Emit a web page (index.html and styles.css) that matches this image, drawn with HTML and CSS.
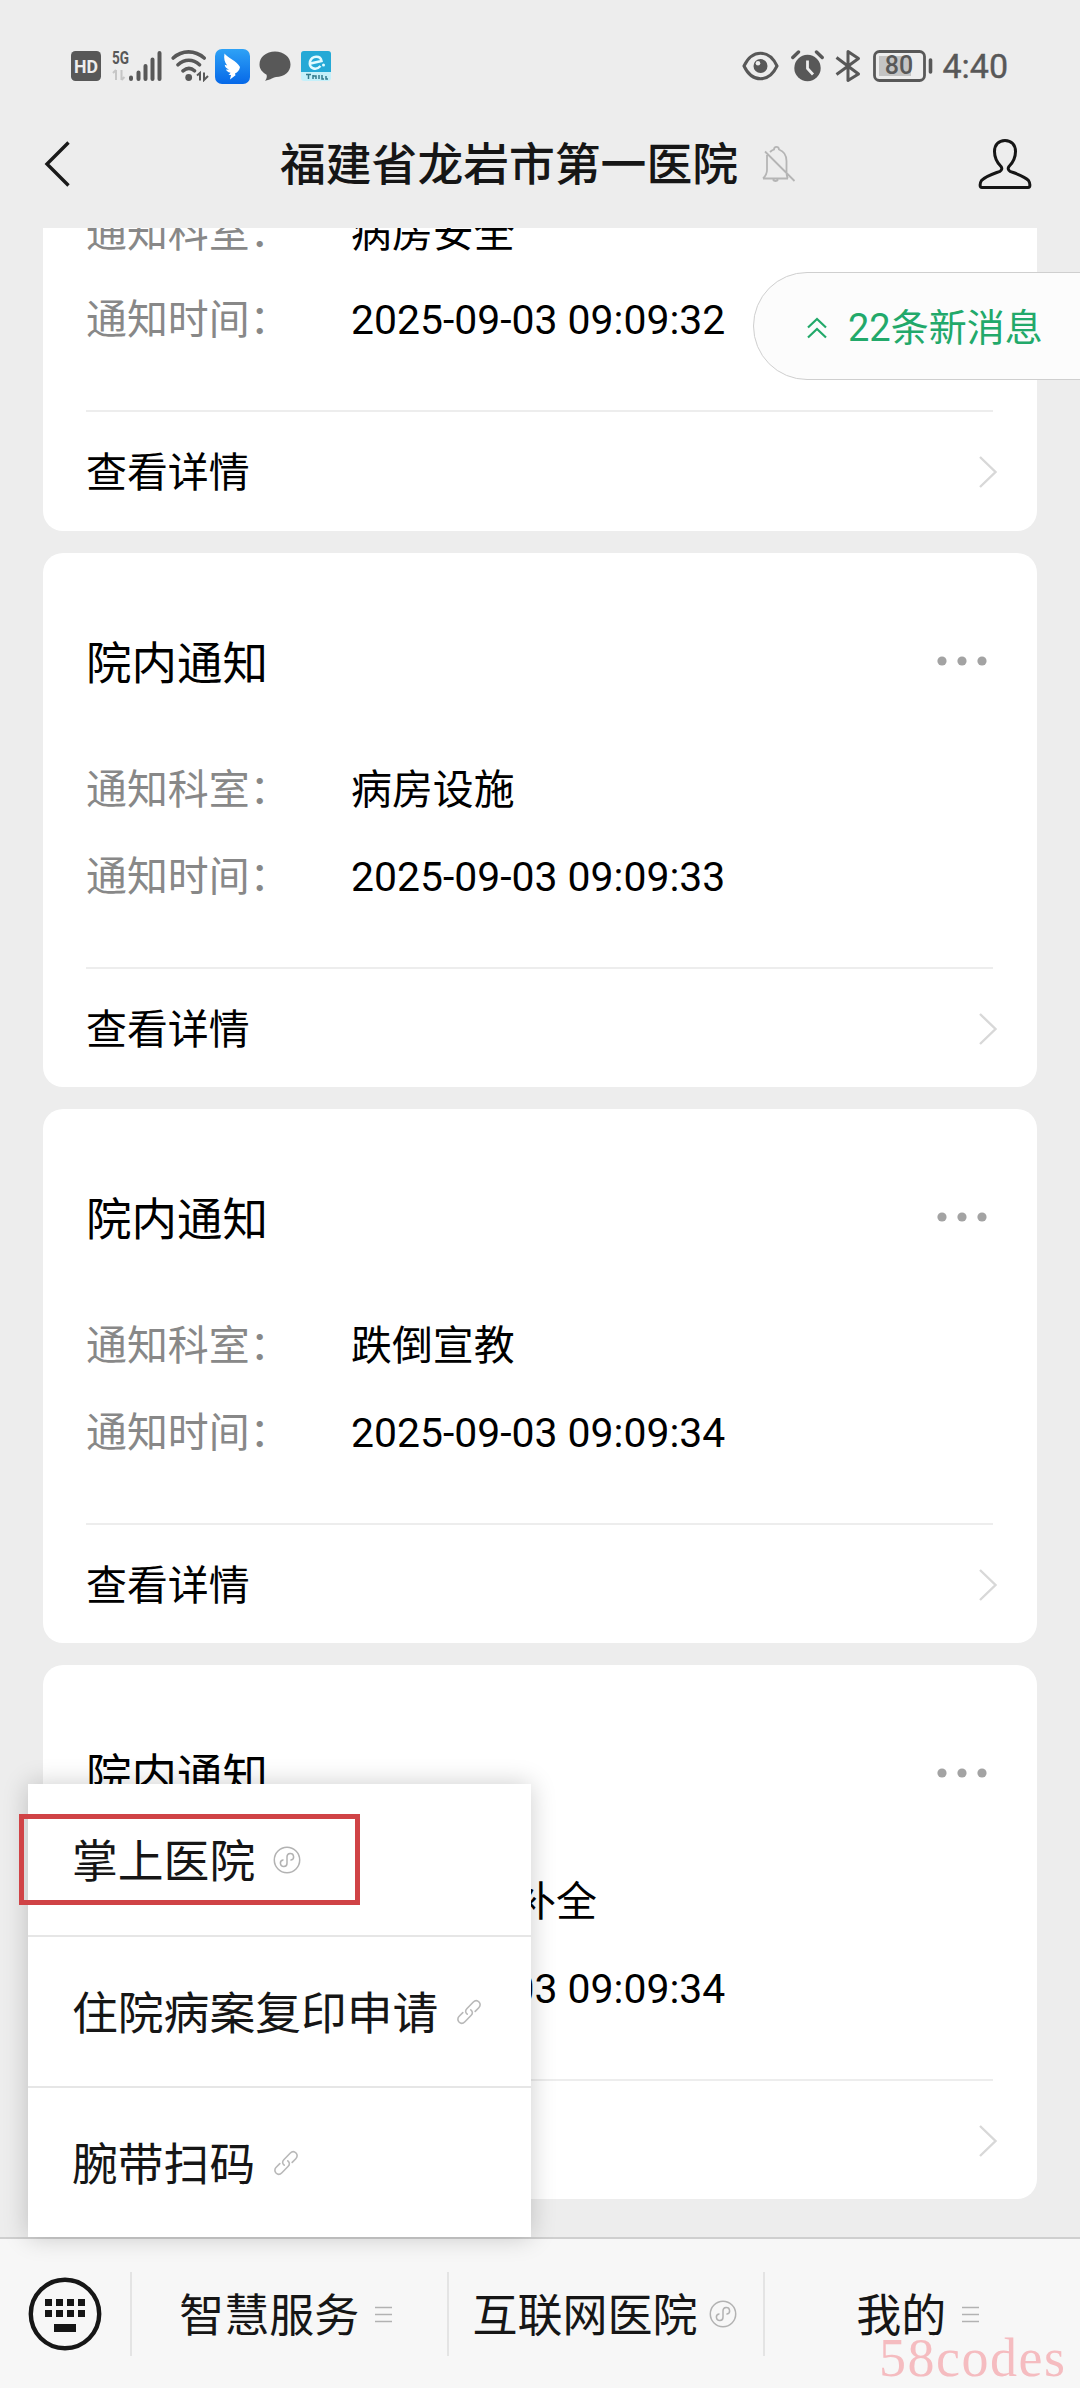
FILE: index.html
```html
<!DOCTYPE html>
<html lang="zh-CN">
<head>
<meta charset="utf-8">
<title>福建省龙岩市第一医院</title>
<link rel="stylesheet" href="styles.css">
</head>
<body>
<svg class="defs" aria-hidden="true">
  <symbol id="mini" viewBox="0 0 28 28"><g fill="none" stroke="#b2b2b2" stroke-width="1.5" stroke-linecap="round"><circle cx="14" cy="14" r="12.7"/><path d="M14 17.200a3.300 3.300 0 1 1-4-3.200M14 17.200v-6.400a3.300 3.300 0 1 1 4 3.200"/></g></symbol>
  <symbol id="link" viewBox="0 0 26 26"><g fill="none" stroke="#b8b8b8" stroke-width="1.6" stroke-linecap="round"><path d="M11.2 15.2c-2-1.600-2-3.900-.4-5.500l6.300-6.400c1.800-1.800 4.300-1.800 5.900-.3 1.600 1.600 1.500 4-.2 5.700l-3.600 3.700"/><path d="M14.800 10.800c2 1.600 2 3.900.4 5.500l-6.300 6.400c-1.800 1.800-4.300 1.800-5.900.3-1.600-1.600-1.500-4 .2-5.700l3.600-3.700"/></g></symbol>
  <symbol id="more" viewBox="0 0 17 17"><path d="M0 1.500h17M0 8.500h17M0 15.500h17" stroke="#b2b2b2" stroke-width="1.700"/></symbol>
  <symbol id="next" viewBox="0 0 20 34"><path d="M2 2l15.500 15L2 32" fill="none" stroke="#d8d8d8" stroke-width="2.400"/></symbol>
  <symbol id="dots" viewBox="0 0 50 10"><g fill="#a3a3a3"><circle cx="5" cy="5" r="4.600"/><circle cx="25" cy="5" r="4.600"/><circle cx="45" cy="5" r="4.600"/></g></symbol>
</svg>

<div class="screen">
  <header class="top">
    <div class="status">
      <div class="status-left">
        <svg width="30" height="30" viewBox="0 0 30 30"><rect width="30" height="30" rx="4.500" fill="#585858"/><text x="15" y="21.500" text-anchor="middle" textLength="24" lengthAdjust="spacingAndGlyphs" class="hd">HD</text></svg>
        <svg class="signal" width="50" height="32" viewBox="0 0 50 32"><text x="0" y="13.500" textLength="17" lengthAdjust="spacingAndGlyphs" class="fiveg">5G</text><path d="M4 20v10M1 23l3-3M9.500 20v10M9.500 30l3-3" fill="none" stroke="#c6c6c6" stroke-width="2"/><g stroke="#585858" stroke-width="4" stroke-linecap="round"><path d="M19 27.500v1.500M26.500 22.500v6.500M33.500 16v13M40.500 9.500v19.500M47.500 3v26"/></g></svg>
        <svg class="wifi" width="38" height="32" viewBox="0 0 38 32"><g fill="none" stroke="#585858" stroke-width="3.600" stroke-linecap="round"><path d="M2.200 8C11-.2 24-.2 33.200 8M7 14.800c6.500-6 15-6 21.500 0M12 20.800c4-3.300 8-3.300 11.500 0"/></g><circle cx="17.700" cy="27.500" r="3.400" fill="#585858"/><path d="M26 25.500l3-2.500v7.500M33 22.500V30l4-4" fill="none" stroke="#585858" stroke-width="2"/></svg>
        <svg class="wing" width="35" height="35" viewBox="0 0 35 35"><defs><linearGradient id="wg" x2="0" y2="1"><stop stop-color="#2ea2f6"/><stop offset="1" stop-color="#0668e8"/></linearGradient></defs><rect width="35" height="35" rx="7" fill="url(#wg)"/><path d="M9.500 4.500c3 4.500 12 7 15.500 13.500-.5 3.300-2.500 5.500-5 6.500l.5 1.800-5.500 4.200 1-4.500-2.500-.3c1-.9 1.700-1.400 2-2-3-.6-4-1.900-4.500-3.200l3 .2c-3-1.300-4-3-4.300-4.900l2.500.6C9.700 13.500 8.500 9.500 9.500 4.500z" fill="#fff"/></svg>
        <svg class="bubble" width="32" height="32" viewBox="0 0 32 32"><path d="M16 1.500c8.700 0 15.500 5.500 15.500 13S25.300 27 17 27c-2.500 0-5 3-11 3.700 1.500-1.700 2.200-3.700 1.600-6C3.300 22.300.5 19 .5 14.500c0-7.500 6.800-13 15.500-13z" fill="#585858"/></svg>
        <svg class="eapp" width="30" height="30" viewBox="0 0 30 30"><rect width="30" height="30" rx="3" fill="#c5f0fa"/><path d="M3 0h24a3 3 0 0 1 3 3v18H0V3a3 3 0 0 1 3-3z" fill="#25a9d6"/><path d="M9.500 12.500l11-2.500c-1-6-9.500-5.500-11.500.5-1.500 7 6 9.500 10.500 4.500" fill="none" stroke="#e3fbff" stroke-width="2.500"/><circle cx="22.500" cy="14" r="1.500" fill="#e3fbff"/><path d="M5 23.500h5M7.500 23.500V28M12 24v4M12 25h3v3M18 24v4M21 24v4h2M25 25v3h2" fill="none" stroke="#337b8d" stroke-width="1.500"/></svg>
      </div>
      <div class="status-right">
        <svg width="37" height="30" viewBox="0 0 37 30"><path d="M2 15C10-2 27-2 35 15 27 32 10 32 2 15z" fill="none" stroke="#585858" stroke-width="3"/><circle cx="18.500" cy="15" r="7" fill="#585858"/><circle cx="16" cy="12.300" r="2.300" fill="#ededed"/></svg>
        <svg class="alarm" width="33" height="32" viewBox="0 0 33 32"><circle cx="16.500" cy="18" r="13.200" fill="#585858"/><path d="M1.800 7.500L7.500 2M31.200 7.500L25.500 2" stroke="#585858" stroke-width="3.400" stroke-linecap="round"/><path d="M16.500 10.500v8l5.500 6" fill="none" stroke="#ededed" stroke-width="2.800"/></svg>
        <svg class="bt" width="26" height="34" viewBox="0 0 26 34"><path d="M1.500 8.500l22 16.500L13 31.500v-29L23.500 9.500l-22 16" fill="none" stroke="#585858" stroke-width="3" stroke-linejoin="round"/></svg>
        <svg class="battery" width="60" height="32" viewBox="0 0 60 32"><rect x="1.500" y="1.500" width="50" height="29" rx="5" fill="none" stroke="#585858" stroke-width="2.800"/><rect x="6" y="6" width="32" height="20" fill="#c4c4c4"/><text x="26" y="24" text-anchor="middle" class="level">80</text><path d="M57.500 10v12" stroke="#585858" stroke-width="3.600" stroke-linecap="round"/></svg>
        <span class="clock">4:40</span>
      </div>
    </div>
    <div class="navbar">
      <svg class="back" width="27" height="46" viewBox="0 0 27 46"><path d="M24.500 1.500L3 23l21.500 21.500" fill="none" stroke="#1a1a1a" stroke-width="3.400"/></svg>
      <div class="name">
        <h1>福建省龙岩市第一医院</h1>
        <svg width="34" height="38" viewBox="0 0 34 38"><path d="M1 33.500h25M5 10v15c0 4-1.500 6-4 8.500M26 33.500c-1.500-1.500-1.500-4-1.500-8V16c0-6-3.500-10-7.500-11.500C17 1 12 1 12 4.500c-1.500.5-3 1.500-4 2.500M11 34.500c1 2 4 2 5 0M3 6.500l29.500 29.500" fill="none" stroke="#b5b5b5" stroke-width="1.800"/></svg>
      </div>
      <svg class="person" width="54" height="52" viewBox="0 0 54 52"><path d="M27 2.500c-6.500 0-10.500 4.500-10.500 11 0 6 2.500 11 6.500 15 1.300 1.700 1 3.500-1 4.800C15 36 7 38.500 3.500 42.500 1.800 45 1.300 49.500 4 49.500h46c2.700 0 2.200-4.500.5-7C47 38.500 39 36 32 33.300c-2-1.300-2.300-3.100-1-4.800 4-4 6.500-9 6.500-15 0-6.500-4-11-10.500-11z" fill="none" stroke="#161616" stroke-width="3"/></svg>
    </div>
  </header>

  <main class="feed">
    <section class="card card-cut">
      <dl class="rows">
        <dt>通知科室：</dt><dd>病房安全</dd>
        <dt>通知时间：</dt><dd>2025-09-03 09:09:32</dd>
      </dl>
      <div class="detail"><span>查看详情</span><svg><use href="#next"/></svg></div>
    </section>
    <section class="card">
      <div class="head"><h2>院内通知</h2><svg><use href="#dots"/></svg></div>
      <dl class="rows">
        <dt>通知科室：</dt><dd>病房设施</dd>
        <dt>通知时间：</dt><dd>2025-09-03 09:09:33</dd>
      </dl>
      <div class="detail"><span>查看详情</span><svg><use href="#next"/></svg></div>
    </section>
    <section class="card">
      <div class="head"><h2>院内通知</h2><svg><use href="#dots"/></svg></div>
      <dl class="rows">
        <dt>通知科室：</dt><dd>跌倒宣教</dd>
        <dt>通知时间：</dt><dd>2025-09-03 09:09:34</dd>
      </dl>
      <div class="detail"><span>查看详情</span><svg><use href="#next"/></svg></div>
    </section>
    <section class="card">
      <div class="head"><h2>院内通知</h2><svg><use href="#dots"/></svg></div>
      <dl class="rows">
        <dt></dt><dd class="tail">补全</dd>
        <dt></dt><dd>2025-09-03 09:09:34</dd>
      </dl>
      <div class="detail"><span></span><svg><use href="#next"/></svg></div>
    </section>
  </main>

  <footer class="tabs">
    <div class="keyboard"><svg width="74" height="74" viewBox="0 0 74 74"><circle cx="37" cy="37" r="34.200" fill="none" stroke="#161616" stroke-width="4.400"/><g fill="#161616"><path d="M17 22h7v7h-7zM28 22h7v7h-7zM39 22h7v7h-7zM50 22h7v7h-7zM17 33h7v7h-7zM28 33h7v7h-7zM39 33h7v7h-7zM50 33h7v7h-7zM26 47h22v8H26z"/></g></svg></div>
    <div class="tab"><span>智慧服务</span><svg class="more"><use href="#more"/></svg></div>
    <div class="tab tab-mini"><span>互联网医院</span><svg class="mini"><use href="#mini"/></svg></div>
    <div class="tab tab-last"><span>我的</span><svg class="more"><use href="#more"/></svg></div>
  </footer>

  <div class="unread"><svg width="20" height="22" viewBox="0 0 20 22"><path d="M1 10.500l9-8.500 9 8.500M1 20.500l9-8.500 9 8.500" fill="none" stroke="#22a96a" stroke-width="2.200"/></svg><span>22条新消息</span></div>

  <nav class="menu">
    <div class="item"><span>掌上医院</span><svg class="mini"><use href="#mini"/></svg></div>
    <div class="item"><span>住院病案复印申请</span><svg class="link"><use href="#link"/></svg></div>
    <div class="item"><span>腕带扫码</span><svg class="link"><use href="#link"/></svg></div>
  </nav>
  <div class="highlight"></div>
  <div class="watermark">58codes</div>
</div>
</body>
</html>
```
FILE: styles.css
```css
* { box-sizing: border-box; }

body {
  margin: 0;
  background: #ededed;
  font-family: Roboto, "Noto Sans CJK SC", sans-serif;
  color: #000;
}

h1, h2, dl, dd { margin: 0; font-weight: 400; }
svg { display: block; flex: none; }
.defs { position: absolute; width: 0; height: 0; }

.screen {
  position: relative;
  display: flex;
  flex-direction: column;
  width: 1080px;
  height: 2388px;
  overflow: hidden;
}

/* Status bar and title */
.top { flex: none; height: 228px; }

.status {
  display: flex;
  justify-content: space-between;
  height: 100px;
  padding: 32px 71px 0;
}

.status-left, .status-right { display: flex; align-items: center; height: 68px; }
.signal { margin-left: 11px; }
.wifi { margin-left: 9px; }
.wing { margin-left: 6px; }
.bubble { margin-left: 9px; }
.eapp { margin-left: 10px; }
.alarm { margin-left: 12px; }
.bt { margin-left: 11px; }
.battery { margin-left: 12px; }
.hd { font: 700 19px Roboto, sans-serif; fill: #ededed; }
.fiveg { font: 700 18px Roboto, sans-serif; fill: #585858; }
.level { font: 500 25px Roboto, sans-serif; fill: #585858; }
.clock { margin-left: 9px; font-size: 34px; line-height: 40px; color: #585858; -webkit-text-stroke: .4px #585858; }
.status-right { margin-right: 1px; }

.navbar {
  display: flex;
  align-items: center;
  justify-content: space-between;
  height: 128px;
  padding: 0 48px 0 44px;
}

.name { display: flex; align-items: center; gap: 24px; padding-left: 27px; }
.name h1 { padding-top: 3px; font-size: 45.800px; line-height: 60px; font-weight: 500; color: #161616; }

/* Message cards */
.feed {
  flex: 1;
  min-height: 0;
  display: flex;
  flex-direction: column;
  gap: 22px;
  padding: 0 43px;
  overflow: hidden;
}

.card {
  flex: none;
  height: 534px;
  padding: 0 44px 0 43px;
  border-radius: 20px;
  background: #fff;
}

.card-cut { height: 343px; margin-top: -40px; }

.head {
  display: flex;
  align-items: center;
  justify-content: space-between;
  height: 192px;
  padding: 31px 6px 0 0;
}

.head h2 { font-size: 45.500px; line-height: 60px; }
.head svg { width: 50px; height: 10px; margin-top: -7px; }

.rows {
  display: grid;
  grid-template-columns: 265px 1fr;
  grid-auto-rows: 87px;
  height: 222px;
  font-size: 40.900px;
  line-height: 90px;
}

.rows dt { color: #888; }
.rows .tail { padding-left: 164px; }

.detail {
  display: flex;
  align-items: center;
  justify-content: space-between;
  height: 120px;
  padding: 4px 0 0;
  border-top: 2px solid #ededed;
  font-size: 40.900px;
  line-height: 60px;
}

.detail svg { width: 20px; height: 34px; margin: -2px -5px 0 0; }

/* Bottom tabs */
.tabs {
  flex: none;
  display: grid;
  grid-template-columns: 130px repeat(3, 1fr);
  height: 151px;
  padding: 33px 0 32px;
  border-top: 2px solid #cfcfcf;
  background: #f7f7f7;
}

.keyboard { display: flex; align-items: center; padding-left: 28px; }

.tab {
  display: flex;
  align-items: center;
  justify-content: center;
  gap: 16px;
  padding-right: 7px;
  border-left: 2px solid #e4e4e4;
  font-size: 45px;
  line-height: 60px;
  color: #161616;
}

.tab span { padding-top: 6px; }
.tab-mini { gap: 11px; padding-right: 3px; }
.tab-last { padding-right: 10px; }
.more { width: 17px; height: 17px; }
.mini { width: 28px; height: 28px; }
.link { width: 26px; height: 26px; }

/* Overlays */
.unread {
  position: absolute;
  top: 272px;
  left: 753px;
  display: flex;
  align-items: center;
  gap: 21px;
  width: 340px;
  height: 108px;
  padding: 4px 0 0 53px;
  border: 1px solid #cfcfcf;
  border-radius: 54px 0 0 54px;
  background: #fcfcfc;
  font-size: 38px;
  line-height: 60px;
  color: #22a96a;
}

.menu {
  position: absolute;
  top: 1784px;
  left: 28px;
  width: 503px;
  height: 453px;
  background: #fff;
  box-shadow: 0 0 24px rgba(0, 0, 0, .2);
}

.item {
  display: flex;
  align-items: center;
  gap: 18px;
  height: 151px;
  padding: 0 0 0 44px;
  font-size: 45.800px;
  line-height: 60px;
  color: #161616;
}

.item + .item { border-top: 2px solid #e6e6e6; }
.item span { padding-top: 7px; }

.highlight {
  position: absolute;
  top: 1814px;
  left: 19px;
  width: 341px;
  height: 91px;
  border: 5px solid #d04346;
}

.watermark {
  position: absolute;
  top: 2328px;
  left: 879px;
  font: 54px/60px "Liberation Serif", serif;
  letter-spacing: 1.500px;
  color: #f5bcc0;
}
```
